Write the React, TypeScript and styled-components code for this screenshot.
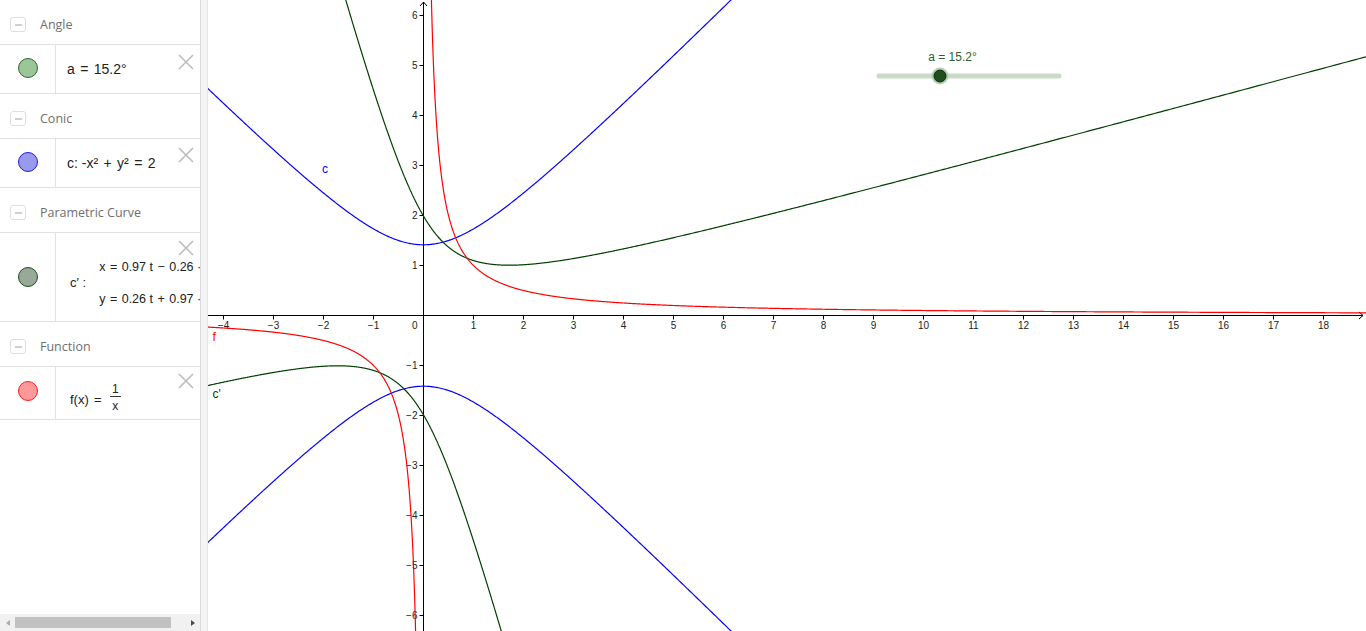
import React from 'react';
import styled, { createGlobalStyle } from 'styled-components';

const GlobalStyle = createGlobalStyle`
    html, body, #root {
        margin: 0;
        padding: 0;
        height: 100%;
    }
    body {
        overflow: hidden;
        background: #ffffff;
        font-family: 'Liberation Sans', Arial, sans-serif;
    }
`;

// graph geometry (svg coordinates, the view starts at page x = 208)
const W = 1158;
const H = 631;
const OX = 215.5;
const OY = 315.5;
const S = 50;
const ANGLE = (15.2 * Math.PI) / 180;

const px = (x: number) => OX + x * S;
const py = (y: number) => OY - y * S;

type Pt = [number, number];

const toPath = (pts: Pt[]) =>
    pts
        .filter((p) => Math.abs(p[0]) < 40 && Math.abs(p[1]) < 40)
        .map((p, i) => `${i ? 'L' : 'M'}${px(p[0]).toFixed(2)} ${py(p[1]).toFixed(2)}`)
        .join(' ');

const sampleLog = (from: number, to: number, n: number) => {
    const out: number[] = [];
    for (let i = 0; i <= n; i++) out.push(from * Math.pow(to / from, i / n));
    return out;
};

const hyperbola = (sign: number) => {
    const pts: Pt[] = [];
    for (let x = -6; x <= 8; x += 0.02) pts.push([x, sign * Math.sqrt(2 + x * x)]);
    return toPath(pts);
};

const inverse = (sign: number) => toPath(sampleLog(0.1, 22, 1400).map((x) => [sign * x, sign / x] as Pt));

// c' = f rotated by a around the origin
const rotated = (sign: number) => {
    const c = Math.cos(ANGLE);
    const s = Math.sin(ANGLE);
    return toPath(sampleLog(0.03, 30, 1600).map((t) => [sign * (c * t - s / t), sign * (s * t + c / t)] as Pt));
};

const curves = {
    cUpper: hyperbola(1),
    cLower: hyperbola(-1),
    fRight: inverse(1),
    fLeft: inverse(-1),
    gUpper: rotated(1),
    gLower: rotated(-1),
};

const xTicks = Array.from({ length: 23 }, (_, i) => i - 4).filter((v) => v !== 0);
const yTicks = Array.from({ length: 13 }, (_, i) => i - 6).filter((v) => v !== 0);
const fmt = (v: number) => (v < 0 ? `\u2212${-v}` : `${v}`);

const Page = styled.div`
    display: flex;
    height: 100vh;
    width: 100vw;
`;

const AlgebraPanel = styled.aside`
    width: 200px;
    flex-shrink: 0;
    display: flex;
    flex-direction: column;
    overflow: hidden;
    background: #ffffff;
`;

const List = styled.div`
    flex: 1;
    overflow: hidden;
`;

const GroupHeader = styled.div`
    height: 44px;
    display: flex;
    align-items: center;
    gap: 14px;
    padding-left: 10px;
    border-bottom: 1px solid #e1e1e1;
    & > * {
        margin-top: 5px;
    }
`;

const CollapseBox = styled.span`
    width: 14px;
    height: 13px;
    border: 1px solid #dedede;
    border-radius: 3px;
    display: flex;
    align-items: center;
    justify-content: center;
    &::after {
        content: '';
        width: 7px;
        height: 2px;
        background: #cfcfcf;
    }
`;

const GroupTitle = styled.span`
    font-family: 'Open Sans', 'Noto Sans', sans-serif;
    font-size: 12.5px;
    color: #6e6e6e;
`;

const ItemRow = styled.div<{ $height: number }>`
    position: relative;
    display: flex;
    height: ${(p) => p.$height}px;
    border-bottom: 1px solid #e1e1e1;
`;

const MarkerCell = styled.div<{ $offset?: number }>`
    width: 56px;
    flex-shrink: 0;
    border-right: 1px solid #e1e1e1;
    display: flex;
    align-items: center;
    justify-content: center;
    padding-bottom: ${(p) => p.$offset ?? 0}px;
    box-sizing: border-box;
`;

const Marker = styled.span<{ $fill: string; $stroke: string }>`
    width: 18px;
    height: 18px;
    border-radius: 50%;
    background: ${(p) => p.$fill};
    border: 1px solid ${(p) => p.$stroke};
`;

const ItemBody = styled.div<{ $indent: number; $drop?: number }>`
    flex: 1;
    display: flex;
    align-items: center;
    padding-left: ${(p) => p.$indent}px;
    padding-top: ${(p) => p.$drop ?? 0}px;
    white-space: nowrap;
    overflow: hidden;
`;

const MathText = styled.span<{ $size?: number; $drop?: number }>`
    font-family: 'Liberation Sans', Arial, sans-serif;
    font-size: ${(p) => p.$size ?? 14}px;
    padding-top: ${(p) => p.$drop ?? 0}px;
    color: #222222;
`;

const Op = styled.span`
    padding: 0 1.5px;
`;

const ParamLines = styled.div`
    display: flex;
    flex-direction: column;
    gap: 18px;
    margin-left: 13px;
    ${Op} {
        padding: 0 1px;
    }
`;

const Fraction = styled.span`
    display: inline-flex;
    flex-direction: column;
    align-items: center;
    font-family: 'Liberation Sans', Arial, sans-serif;
    font-size: 12px;
    line-height: 12px;
    color: #222222;
    margin-left: 7px;
    & > span:first-child {
        padding: 0 2px 1px;
        border-bottom: 1px solid #333;
    }
    & > span:last-child {
        padding-top: 3px;
    }
`;

const DeleteButton = styled.span<{ $top: number }>`
    position: absolute;
    top: ${(p) => p.$top}px;
    right: 6px;
    width: 16px;
    height: 16px;
    svg {
        display: block;
    }
`;

const Scrollbar = styled.div`
    height: 17px;
    flex-shrink: 0;
    display: flex;
    align-items: center;
    background: #f1f1f1;
`;

const ScrollArrow = styled.span<{ $dir: 'left' | 'right' }>`
    width: 15px;
    height: 17px;
    display: flex;
    align-items: center;
    justify-content: center;
    &::before {
        content: '';
        border-top: 3.5px solid transparent;
        border-bottom: 3.5px solid transparent;
        ${(p) => (p.$dir === 'left' ? 'border-right: 4px solid #a4b2a4;' : 'border-left: 4px solid #4a4a4a;')}
    }
`;

const ScrollTrack = styled.div`
    flex: 1;
    display: flex;
    align-items: center;
`;

const ScrollThumb = styled.div`
    width: 156px;
    height: 11px;
    background: #c1c1c1;
`;

const Splitter = styled.div`
    width: 8px;
    flex-shrink: 0;
    box-sizing: border-box;
    background: #f4f4f4;
    border-left: 1px solid #dadada;
    border-right: 1px solid #e6e6e6;
`;

const GraphView = styled.main`
    flex: 1;
    overflow: hidden;
    background: #ffffff;
    svg {
        display: block;
    }
    text {
        font-family: 'Liberation Sans', Arial, sans-serif;
    }
`;

const CloseIcon = () => (
    <svg width="16" height="16" viewBox="0 0 16 16">
        <path d="M1 1 L15 15 M15 1 L1 15" stroke="#bdbdbd" strokeWidth="1.6" fill="none" />
    </svg>
);

const Header = ({ title }: { title: string }) => (
    <GroupHeader>
        <CollapseBox />
        <GroupTitle>{title}</GroupTitle>
    </GroupHeader>
);

const Graph = () => (
    <svg width={W} height={H} viewBox={`0 0 ${W} ${H}`}>
        {/* axes */}
        <g stroke="#000" strokeWidth="1" fill="none">
            <path d={`M0 ${OY} H${W - 3}`} />
            <path d={`M${W - 7} ${OY - 3.5} L${W - 3} ${OY} L${W - 7} ${OY + 3.5}`} />
            <path d={`M${OX} 2 V${H}`} />
            <path d={`M${OX - 3.5} 6 L${OX} 2 L${OX + 3.5} 6`} />
            {xTicks.map((v) => (
                <path key={`xt${v}`} d={`M${px(v)} ${OY} V${OY + 4}`} />
            ))}
            {yTicks.map((v) => (
                <path key={`yt${v}`} d={`M${OX - 4} ${py(v)} H${OX}`} />
            ))}
        </g>
        <g fontSize="10" fill="#222">
            {xTicks.map((v) => (
                <text key={`xl${v}`} x={px(v)} y={OY + 13} textAnchor="middle">
                    {fmt(v)}
                </text>
            ))}
            {yTicks.map((v) => (
                <text key={`yl${v}`} x={OX - 6} y={py(v) + 3.5} textAnchor="end">
                    {fmt(v)}
                </text>
            ))}
            <text x={OX - 6} y={OY + 13} textAnchor="end">
                0
            </text>
        </g>

        {/* objects */}
        <g fill="none" strokeWidth="1.2" strokeLinejoin="round">
            <path d={curves.cUpper} stroke="#0000ff" />
            <path d={curves.cLower} stroke="#0000ff" />
            <path d={curves.gUpper} stroke="#004000" />
            <path d={curves.gLower} stroke="#004000" />
            <path d={curves.fRight} stroke="#ff0000" />
            <path d={curves.fLeft} stroke="#ff0000" />
        </g>
        <g fontSize="12">
            <text x={114} y={173} fill="#0000ff">
                c
            </text>
            <text x={4.5} y={341} fill="#ff0000">
                f
            </text>
            <text x={4.5} y={397.5} fill="#004000">
                c'
            </text>
        </g>

        {/* slider a */}
        <g>
            <line x1={671} y1={76} x2={851} y2={76} stroke="#c9dcc6" strokeWidth="5" strokeLinecap="round" />
            <circle cx={732} cy={76} r={8.5} fill="#a9c5a5" opacity="0.8" />
            <circle cx={732} cy={76} r={6} fill="#1f4f1f" stroke="#0d2d0d" strokeWidth="1" />
            <text x={744.5} y={61} fontSize="12" fill="#2d5e2d" textAnchor="middle">
                a = 15.2°
            </text>
        </g>
    </svg>
);

const App = () => {
    return (
        <Page>
            <GlobalStyle />
            <AlgebraPanel>
                <List>
                    <Header title="Angle" />
                    <ItemRow $height={48}>
                        <MarkerCell $offset={3}>
                            <Marker $fill="#9cc59a" $stroke="#2c662c" />
                        </MarkerCell>
                        <ItemBody $indent={11}>
                            <MathText>
                                a <Op>=</Op> 15.2°
                            </MathText>
                        </ItemBody>
                        <DeleteButton $top={9}>
                            <CloseIcon />
                        </DeleteButton>
                    </ItemRow>

                    <Header title="Conic" />
                    <ItemRow $height={48}>
                        <MarkerCell $offset={3}>
                            <Marker $fill="#9999ee" $stroke="#1d1dd6" />
                        </MarkerCell>
                        <ItemBody $indent={11}>
                            <MathText>
                                c: -x² <Op>+</Op> y² <Op>=</Op> 2
                            </MathText>
                        </ItemBody>
                        <DeleteButton $top={8}>
                            <CloseIcon />
                        </DeleteButton>
                    </ItemRow>

                    <Header title="Parametric Curve" />
                    <ItemRow $height={88}>
                        <MarkerCell>
                            <Marker $fill="#99a899" $stroke="#1a4a1a" />
                        </MarkerCell>
                        <ItemBody $indent={14} $drop={11}>
                            <MathText $size={13}>c′ :</MathText>
                            <ParamLines>
                                <MathText $size={12.5}>
                                    x <Op>=</Op> 0.97 t <Op>−</Op> 0.26 · 1/t
                                </MathText>
                                <MathText $size={12.5}>
                                    y <Op>=</Op> 0.26 t <Op>+</Op> 0.97 · 1/t
                                </MathText>
                            </ParamLines>
                        </ItemBody>
                        <DeleteButton $top={7}>
                            <CloseIcon />
                        </DeleteButton>
                    </ItemRow>

                    <Header title="Function" />
                    <ItemRow $height={52}>
                        <MarkerCell $offset={5}>
                            <Marker $fill="#ff9999" $stroke="#ff1a1a" />
                        </MarkerCell>
                        <ItemBody $indent={14} $drop={8}>
                            <MathText $size={13} $drop={4}>
                                f(x) <Op>=</Op>
                            </MathText>
                            <Fraction>
                                <span>1</span>
                                <span>x</span>
                            </Fraction>
                        </ItemBody>
                        <DeleteButton $top={6}>
                            <CloseIcon />
                        </DeleteButton>
                    </ItemRow>
                </List>
                <Scrollbar>
                    <ScrollArrow $dir="left" />
                    <ScrollTrack>
                        <ScrollThumb />
                    </ScrollTrack>
                    <ScrollArrow $dir="right" />
                </Scrollbar>
            </AlgebraPanel>
            <Splitter />
            <GraphView>
                <Graph />
            </GraphView>
        </Page>
    );
};

export default App;
